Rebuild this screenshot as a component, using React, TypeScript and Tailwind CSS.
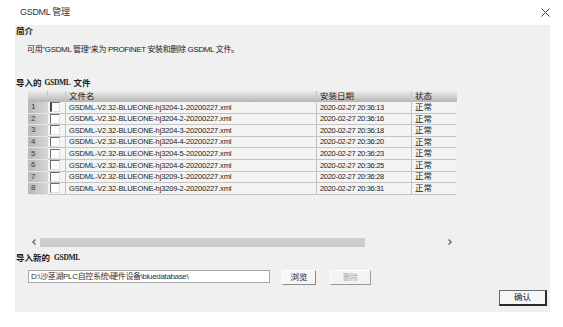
import React from "react";

const rows = [
  ["GSDML-V2.32-BLUEONE-hj3204-1-20200227.xml", "2020-02-27 20:36:13"],
  ["GSDML-V2.32-BLUEONE-hj3204-2-20200227.xml", "2020-02-27 20:36:16"],
  ["GSDML-V2.32-BLUEONE-hj3204-3-20200227.xml", "2020-02-27 20:36:18"],
  ["GSDML-V2.32-BLUEONE-hj3204-4-20200227.xml", "2020-02-27 20:36:20"],
  ["GSDML-V2.32-BLUEONE-hj3204-5-20200227.xml", "2020-02-27 20:36:23"],
  ["GSDML-V2.32-BLUEONE-hj3204-6-20200227.xml", "2020-02-27 20:36:25"],
  ["GSDML-V2.32-BLUEONE-hj3209-1-20200227.xml", "2020-02-27 20:36:28"],
  ["GSDML-V2.32-BLUEONE-hj3209-2-20200227.xml", "2020-02-27 20:36:31"],
];

export default function App() {
  return (
    <div className="w-[563px] h-[327px] bg-white text-[#1a1a1a] font-['Liberation_Sans','Noto_Sans_CJK_SC',sans-serif] overflow-hidden">
      {/* title bar */}
      <div className="h-[25px] flex items-center justify-between pl-[20px] pr-[13px]">
        <span className="text-[9px] tracking-[-0.3px] text-[#333]">GSDML 管理</span>
        <svg width="9" height="9" viewBox="0 0 9 9" className="mt-[-1px]">
          <path d="M0.5 0.5 L8.5 8.5 M8.5 0.5 L0.5 8.5" stroke="#444" strokeWidth="1" />
        </svg>
      </div>

      {/* main panel */}
      <div className="ml-[15px] w-[535px] h-[287px] bg-[#f0f0f0] flex flex-col">
        <div className="h-[12px] pl-[1px] flex items-center text-[8.5px] font-bold">简介</div>
        <div className="mt-[7px] h-[12px] pl-[12px] flex items-center text-[8px] tracking-[-0.35px] text-[#222]">
          可用"GSDML 管理"来为 PROFINET 安装和删除 GSDML 文件。
        </div>
        <div className="mt-[21px] h-[12px] pl-[1px] flex items-center text-[8.5px] font-bold">
          导入的 <span className="font-['Liberation_Serif'] text-[7.5px] mx-[3px] tracking-[-0.3px]">GSDML</span> 文件
        </div>

        {/* list view */}
        <div className="mt-[2px] ml-[13px] w-[429px] h-[156px] flex flex-col">
          <div className="flex h-[11px] bg-gradient-to-b from-[#ececec] via-[#d2d2d2] to-[#b4b4b4] text-[8.5px] text-[#222]">
            <div className="w-[20px] border-r border-[#c8c8c8]" />
            <div className="w-[18px] border-r border-[#c8c8c8]" />
            <div className="w-[251px] border-r border-[#c8c8c8] pl-[3px] flex items-center">文件名</div>
            <div className="w-[95px] border-r border-[#c8c8c8] pl-[3px] flex items-center">安装日期</div>
            <div className="w-[44px] pl-[3px] flex items-center">状态</div>
          </div>
          {rows.map((r, i) => (
            <div key={i} className="flex h-[11.6px] text-[7.5px] tracking-[-0.3px] text-[#222]">
              <div className="w-[20px] bg-gradient-to-r from-[#b8b8b8] to-[#d6d6d6] border-b border-[#e4e4e4] pl-[3px] flex items-center text-[#3a3a3a] text-[8px]">
                {i + 1}
              </div>
              <div className="w-[18px] bg-[#f4f4f4] border-b border-r border-[#c4c4c4] flex items-center pl-[2px]">
                <div
                  className={
                    "w-[10px] h-[10px] bg-white border-t border-l border-b border-r border-t-[#6e6e6e] border-l-[#6e6e6e] border-b-[#e0e0e0] border-r-[#e0e0e0] " +
                    (i === 0 ? "border-l-2 border-l-[#444]" : "")
                  }
                />
              </div>
              <div className="w-[251px] bg-[#f4f4f4] border-b border-r border-[#c4c4c4] pl-[3px] flex items-center whitespace-nowrap overflow-hidden tracking-[-0.15px]">
                {r[0]}
              </div>
              <div className="w-[95px] bg-[#f4f4f4] border-b border-r border-[#c4c4c4] pl-[3px] flex items-center whitespace-nowrap">
                {r[1]}
              </div>
              <div className="w-[44px] bg-[#f4f4f4] border-b border-[#c4c4c4] pl-[3px] flex items-center text-[8.5px] tracking-normal">
                正常
              </div>
            </div>
          ))}
          <div className="flex-1" />
          {/* horizontal scrollbar */}
          <div className="h-[10px] flex items-center text-[#555]">
            <div className="w-[12px] flex justify-center">
              <svg width="4" height="6" viewBox="0 0 4 6"><path d="M3.5 0.5 L0.8 3 L3.5 5.5" stroke="#555" fill="none" strokeWidth="1.1" /></svg>
            </div>
            <div className="w-[325px] h-[9px] bg-[#cdcdcd]" />
            <div className="flex-1" />
            <div className="w-[14px] flex justify-center">
              <svg width="4" height="6" viewBox="0 0 4 6"><path d="M0.5 0.5 L3.2 3 L0.5 5.5" stroke="#555" fill="none" strokeWidth="1.1" /></svg>
            </div>
          </div>
        </div>

        <div className="mt-[5px] h-[12px] pl-[1px] flex items-center text-[8.5px] font-bold">
          导入新的 <span className="font-['Liberation_Serif'] text-[7.5px] ml-[4px] tracking-[-0.3px]">GSDML</span>
        </div>

        <div className="mt-[6px] ml-[13px] flex items-start h-[15px]">
          <div className="w-[242px] h-[13px] bg-white border border-[#a8a8a8] pl-[2px] flex items-center text-[8px] tracking-[-0.35px] text-[#333] whitespace-nowrap overflow-hidden">
            D:\沙茎湖PLC自控系统\硬件设备\bluedatabase\
          </div>
          <button className="ml-[12px] w-[34px] h-[15px] bg-[#f6f6f6] border border-t-white border-l-white border-r-[#8a8a8a] border-b-[#8a8a8a] text-[8.5px] text-[#222] flex items-center justify-center">
            浏览
          </button>
          <button className="ml-[14px] w-[41px] h-[15px] bg-[#f3f3f3] border border-t-white border-l-white border-r-[#9a9a9a] border-b-[#9a9a9a] text-[7.5px] text-[#a8a8a8] flex items-center justify-center">
            删除
          </button>
        </div>

        <div className="mt-[5px] flex justify-end pr-[3px]">
          <button className="w-[48px] h-[16px] bg-[#f6f6f6] border border-[#6a6a6a] border-r-[#2a2a2a] border-b-[#2a2a2a] border-r-2 border-b-2 text-[8.5px] text-[#222] flex items-center justify-center">
            确认
          </button>
        </div>
      </div>
    </div>
  );
}
